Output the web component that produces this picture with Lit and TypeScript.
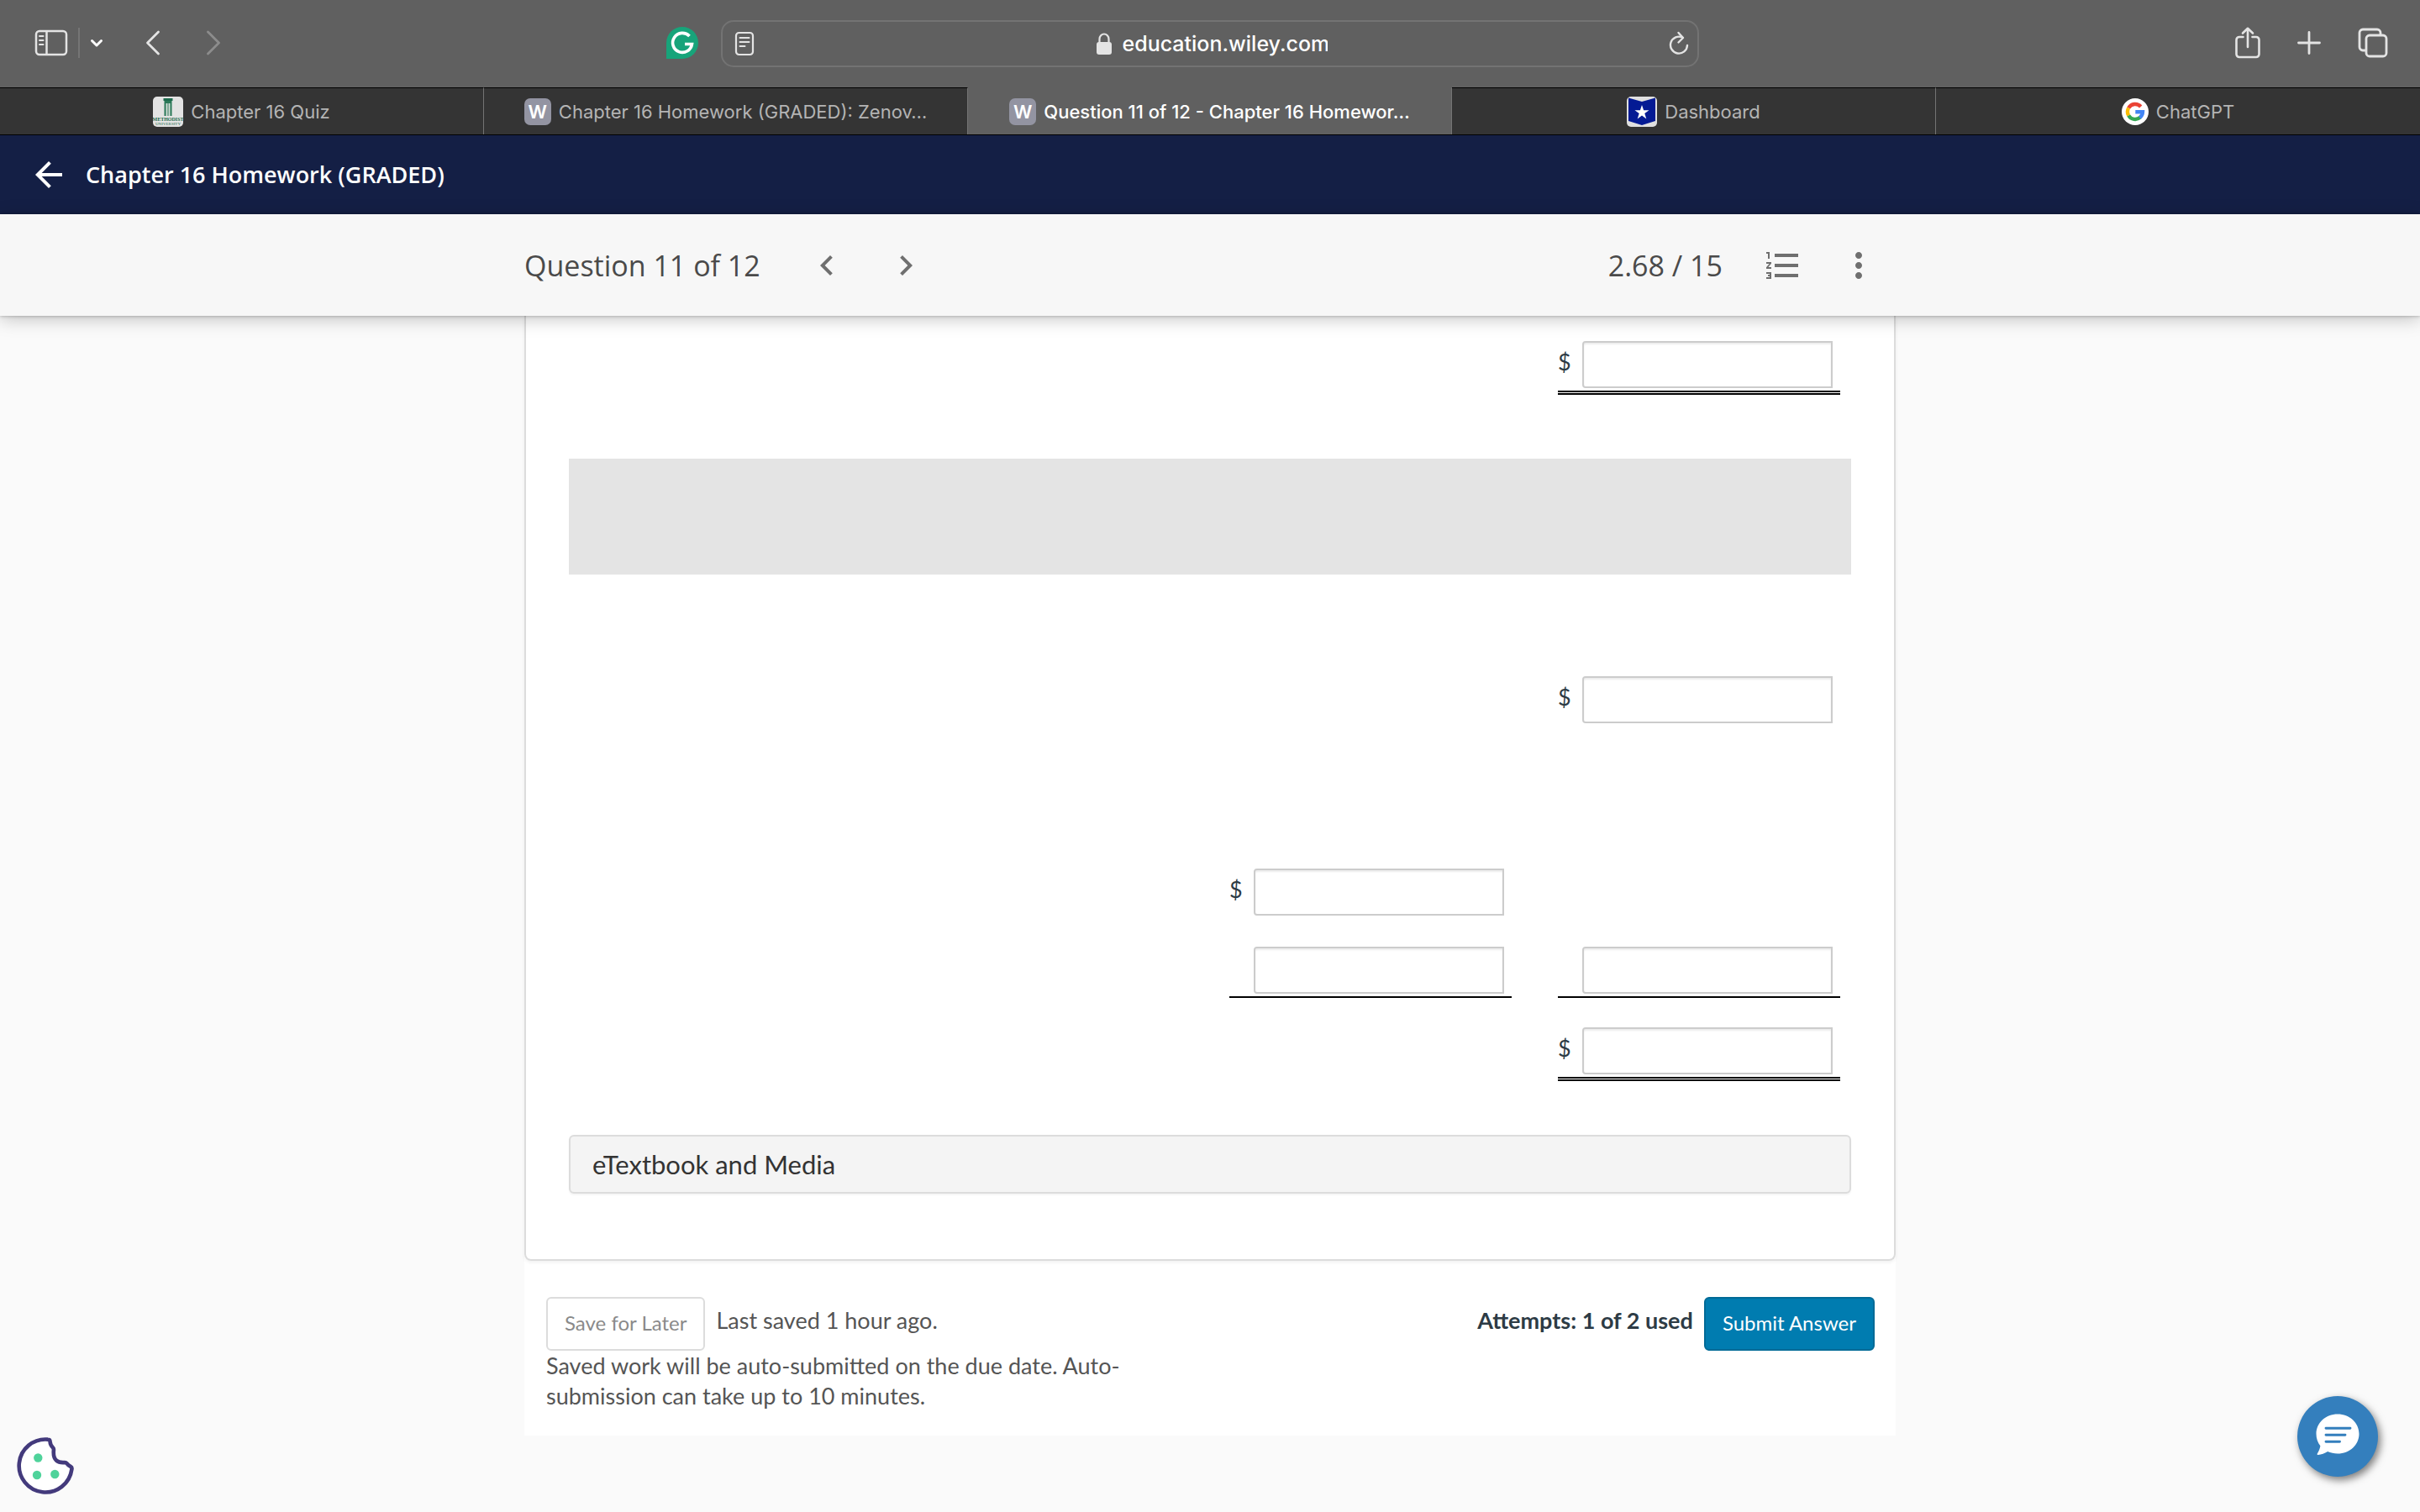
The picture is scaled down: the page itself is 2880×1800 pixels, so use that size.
import { LitElement, html, css, svg, nothing } from "lit";
import { customElement, property } from "lit/decorators.js";
import { classMap } from "lit/directives/class-map.js";

type Favicon = "methodist" | "w" | "star" | "google";

interface BrowserTab {
  title: string;
  icon: Favicon;
  active?: boolean;
}

const TABS: BrowserTab[] = [
  { title: "Chapter 16 Quiz", icon: "methodist" },
  { title: "Chapter 16 Homework (GRADED): Zenov…", icon: "w" },
  { title: "Question 11 of 12 - Chapter 16 Homewor…", icon: "w", active: true },
  { title: "Dashboard", icon: "star" },
  { title: "ChatGPT", icon: "google" },
];

@customElement("browser-chrome")
export class BrowserChrome extends LitElement {
  static styles = css`
    :host {
      display: block;
      font-family: Inter, "Liberation Sans", sans-serif;
      color: #fff;
      background: #606060;
    }
    svg {
      display: block;
      flex: none;
    }
    button {
      border: 0;
      padding: 0;
      background: none;
      font: inherit;
      color: #e4e4e4;
    }
    .bar {
      display: grid;
      grid-template-columns: minmax(0, 1fr) minmax(0, 1164px) minmax(0, 1fr);
      height: 104px;
      align-items: center;
    }
    .side {
      display: flex;
      align-items: center;
      height: 56px;
    }
    .left {
      padding: 0 27px 2px 41px;
    }
    .right {
      justify-content: flex-end;
      gap: 44px;
      padding: 0 38px 2px 0;
    }
    .split {
      width: 2px;
      height: 36px;
      margin: 0 12px;
      background: #757575;
    }
    .back {
      margin-left: 50px;
    }
    .forward {
      margin-left: 54px;
      color: #8c8c8c;
    }
    .extension {
      margin-left: auto;
    }
    .address {
      display: flex;
      align-items: center;
      justify-content: space-between;
      box-sizing: border-box;
      height: 56px;
      padding: 0 10px 0 14px;
      border: 2px solid #737373;
      border-radius: 15px;
    }
    .site {
      display: flex;
      align-items: center;
      gap: 13px;
    }
    .url {
      width: 244px;
      padding: 0;
      border: 0;
      background: none;
      color: #fff;
      font: 500 25px/32px Inter, "Liberation Sans", sans-serif;
    }
    .tabs {
      display: grid;
      grid-template-columns: repeat(5, minmax(0, 1fr));
      border-bottom: 1px solid #000;
    }
    .tab {
      display: flex;
      align-items: center;
      justify-content: center;
      gap: 9px;
      height: 56px;
      border-top: 1px solid #000;
      border-right: 1px solid #747474;
      background: #343434;
      color: #b4b4b4;
      font-size: 22px;
      white-space: nowrap;
    }
    .tab:last-child {
      border-right: 0;
    }
    .active {
      border-top-color: #606060;
      background: #606060;
      color: #fff;
      font-weight: 500;
    }
    .letter {
      width: 32px;
      height: 32px;
      border-radius: 7px;
      background: #9394a2;
      color: #fff;
      font-size: 22px;
      font-weight: 600;
      line-height: 33px;
      text-align: center;
    }
  `;

  private favicon(icon: Favicon) {
    switch (icon) {
      case "methodist":
        return html`<svg width="36" height="36" viewBox="0 0 36 36" aria-hidden="true">
          <rect width="36" height="36" rx="5" fill="#e3e3e3" />
          <path d="M12.500 2h11v3h-11z" fill="#1d6b4d" />
          <path d="M13.500 5h9v18h-9z" fill="#2b7858" />
          <path d="M15.500 8h5v15h-5z" fill="#cfdcd5" />
          <path d="M17 8h2v15h-2z" fill="#7fa896" />
          <text x="18" y="29" font-family="Liberation Serif, serif" font-size="6" font-weight="700" text-anchor="middle" fill="#1d6b4d">METHODIST</text>
          <text x="18" y="34" font-family="Liberation Serif, serif" font-size="5" text-anchor="middle" fill="#1d6b4d">UNIVERSITY</text>
        </svg>`;
      case "w":
        return html`<span class="letter">W</span>`;
      case "star":
        return html`<svg width="36" height="36" viewBox="0 0 36 36" aria-hidden="true">
          <rect width="36" height="36" rx="5" fill="#e0e0e0" />
          <path d="M2 1.500 18 6l16-4.500V29l-16 5L2 29z" fill="#041a94" />
          <path d="m18 10 2.100 6.200h6.400l-5.200 3.900 2 6.300-5.300-3.900-5.300 3.900 2-6.300-5.200-3.900h6.400z" fill="#fff" />
        </svg>`;
      default:
        return html`<svg width="32" height="32" viewBox="0 0 32 32" aria-hidden="true">
          <circle cx="16" cy="16" r="16" fill="#fff" />
          <g fill="none" stroke-width="4.400">
            <path d="M8.200 11.500A9 9 0 0 1 22.700 9.900" stroke="#ea4335" />
            <path d="M8.200 20.500A9 9 0 0 1 8.200 11.500" stroke="#fbbc05" />
            <path d="M22 22.700A9 9 0 0 1 8.200 20.500" stroke="#34a853" />
            <path d="M16.300 16.200H25A9 9 0 0 1 21.500 23" stroke="#4285f4" />
          </g>
        </svg>`;
    }
  }

  render() {
    return html`
      <div class="bar">
        <div class="side left">
          <button aria-label="Sidebar">
            <svg width="40" height="32" viewBox="0 0 40 32" fill="none" stroke="currentColor" stroke-width="2.500">
              <rect x="2" y="2" width="36" height="28" rx="4" />
              <path d="M14.500 2v28" />
              <path d="M6 8h4.500M6 13h4.500M6 18h4.500" stroke-width="2" stroke-linecap="round" />
            </svg>
          </button>
          <span class="split"></span>
          <button aria-label="Tab groups">
            <svg width="16" height="12" viewBox="0 0 16 12" fill="none" stroke="#fff" stroke-width="3" stroke-linecap="round" stroke-linejoin="round">
              <path d="m2.500 3.500 5.500 5.500 5.500-5.500" />
            </svg>
          </button>
          <button class="back" aria-label="Back">
            <svg width="18" height="32" viewBox="0 0 18 32" fill="none" stroke="currentColor" stroke-width="2.800" stroke-linecap="round" stroke-linejoin="round">
              <path d="M15.500 3 2.500 16l13 13" />
            </svg>
          </button>
          <button class="forward" aria-label="Forward">
            <svg width="18" height="32" viewBox="0 0 18 32" fill="none" stroke="currentColor" stroke-width="2.800" stroke-linecap="round" stroke-linejoin="round">
              <path d="m2.500 3 13 13-13 13" />
            </svg>
          </button>
          <button class="extension" aria-label="Grammarly">
            <svg width="38" height="38" viewBox="0 0 38 38">
              <path d="M19 0a19 19 0 0 1 0 38H0V19A19 19 0 0 1 19 0z" fill="#17a47a" />
              <path d="M27.500 11A11.500 11.500 0 1 0 30.500 20.500H22" fill="none" stroke="#fff" stroke-width="3.600" />
            </svg>
          </button>
        </div>
        <div class="address">
          <button aria-label="Reader">
            <svg width="24" height="30" viewBox="0 0 24 30" fill="none" stroke="currentColor" stroke-width="2.200">
              <rect x="2" y="2" width="20" height="26" rx="3.500" />
              <path d="M6.500 8h11M6.500 13h11M6.500 18h6" stroke-linecap="round" stroke-width="2" />
            </svg>
          </button>
          <div class="site">
            <svg width="18" height="26" viewBox="0 0 18 26" aria-hidden="true">
              <path d="M3.500 13V7.500a5.500 6 0 0 1 11 0V13" fill="none" stroke="#e4e4e4" stroke-width="2.200" />
              <rect y="11" width="18" height="15" rx="3" fill="#e4e4e4" />
            </svg>
            <input class="url" type="text" aria-label="Address" value="education.wiley.com" />
          </div>
          <button aria-label="Reload">
            <svg width="24" height="30" viewBox="0 0 24 30" fill="none" stroke="currentColor" stroke-width="2.400" stroke-linecap="round" stroke-linejoin="round">
              <path d="M16.500 7.700A10 10 0 1 0 22 17" />
              <path d="m11.500 2 5.500 6-5.500 5.500" />
            </svg>
          </button>
        </div>
        <div class="side right">
          <button aria-label="Share">
            <svg width="30" height="38" viewBox="0 0 30 38" fill="none" stroke="currentColor" stroke-width="2.600" stroke-linecap="round" stroke-linejoin="round">
              <path d="M9.500 12H5a3.500 3.500 0 0 0-3.500 3.500v17A3.500 3.500 0 0 0 5 36h20a3.500 3.500 0 0 0 3.500-3.500v-17A3.500 3.500 0 0 0 25 12h-4.500" />
              <path d="M15 24V2M9 7.500 15 1.800l6 5.700" />
            </svg>
          </button>
          <button aria-label="New tab">
            <svg width="28" height="28" viewBox="0 0 28 28" stroke="currentColor" stroke-width="2.800" stroke-linecap="round">
              <path d="M14 1.500v25M1.500 14h25" />
            </svg>
          </button>
          <button aria-label="Tab overview">
            <svg width="36" height="36" viewBox="0 0 36 36" fill="none" stroke="currentColor" stroke-width="2.800">
              <rect x="10" y="9" width="24" height="25" rx="4" />
              <path d="M10 27H6a4 4 0 0 1-4-4V6a4 4 0 0 1 4-4h17a4 4 0 0 1 4 4v3" />
            </svg>
          </button>
        </div>
      </div>
      <nav class="tabs">
        ${TABS.map(
          (t) => html`<button class=${classMap({ tab: true, active: !!t.active })}>
            ${this.favicon(t.icon)}<span>${t.title}</span>
          </button>`
        )}
      </nav>
    `;
  }
}

@customElement("amount-field")
export class AmountField extends LitElement {
  @property() name = "";
  @property({ type: Boolean }) currency = false;
  @property() rule: "none" | "single" | "double" = "none";

  static styles = css`
    :host {
      display: block;
      color: #2d3b45;
      font: 27px/36px Lato, sans-serif;
    }
    .amount {
      display: grid;
      grid-template-columns: 29px minmax(0, 1fr);
      align-items: center;
      padding: 0 9px 2px 0;
    }
    .single {
      padding-bottom: 3px;
      border-bottom: 2px solid #000;
    }
    .double {
      padding-bottom: 3px;
      border-bottom: 5px double #000;
    }
    label {
      padding-bottom: 6px;
    }
    .box {
      grid-column: 2;
      box-sizing: border-box;
      width: 100%;
      height: 56px;
      padding: 0 12px;
      border: 2px solid #ccc;
      border-radius: 4px 0 0 4px;
      background: #fff;
      box-shadow: inset 0 2px 2px rgba(0, 0, 0, 0.08);
      color: inherit;
      font: inherit;
      text-align: right;
    }
  `;

  render() {
    return html`<div class=${classMap({ amount: true, [this.rule]: true })}>
      ${this.currency ? html`<label for="box">$</label>` : nothing}
      <input class="box" id="box" type="text" aria-label=${this.name} />
    </div>`;
  }
}

const icon = (d: string) => html`<svg width="48" height="48" viewBox="0 0 24 24" aria-hidden="true">
  ${svg`<path d=${d} fill="currentColor" />`}
</svg>`;

@customElement("app-root")
export class AppRoot extends LitElement {
  static styles = css`
    :host {
      display: block;
      min-height: 100vh;
      background: #fafafa;
      font-family: Lato, sans-serif;
      color: #2d3b45;
    }
    svg {
      display: block;
    }
    button {
      font-family: inherit;
    }
    .plain {
      display: block;
      padding: 0;
      border: 0;
      background: none;
      color: inherit;
    }
    .course {
      display: flex;
      align-items: center;
      gap: 20px;
      height: 94px;
      padding-left: 34px;
      background: #141f45;
      color: #fff;
    }
    .course a {
      color: inherit;
    }
    .course h1 {
      margin: 0;
      font: 600 27px/40px "Open Sans", sans-serif;
    }
    .toolbar {
      position: relative;
      z-index: 1;
      background: #f7f7f7;
      color: #6f6f6f;
      box-shadow: 0 0 4px rgba(0, 0, 0, 0.3), 0 4px 20px rgba(0, 0, 0, 0.22);
    }
    .inner {
      display: flex;
      align-items: center;
      box-sizing: border-box;
      max-width: 1632px;
      height: 121px;
      margin: 0 auto;
      padding-right: 20px;
    }
    .inner h2,
    .score {
      margin: 0;
      color: #4a4a4a;
      font: 400 34px/48px "Open Sans", sans-serif;
    }
    .pager {
      display: flex;
      gap: 46px;
      margin-left: 55px;
    }
    .tools {
      display: flex;
      align-items: center;
      gap: 42px;
      margin-left: auto;
    }
    .score {
      margin-right: 6px;
    }
    .column {
      max-width: 1632px;
      margin: 0 auto;
      background: #fff;
    }
    .card {
      padding: 0 51px 78px;
      border: 2px solid #dcdcdc;
      border-top: 0;
      border-radius: 0 0 8px 8px;
      box-shadow: 0 2px 4px rgba(0, 0, 0, 0.06);
    }
    table {
      width: 100%;
      table-layout: fixed;
      border-collapse: collapse;
    }
    .value {
      width: 391px;
    }
    td {
      box-sizing: border-box;
      padding: 17px 13px 18px 42px;
      vertical-align: top;
    }
    .first td {
      height: 170px;
      padding-top: 30px;
    }
    .band td {
      height: 138px;
      background: #e4e4e4;
    }
    .heading td {
      height: 104px;
    }
    .blank td {
      height: 136px;
    }
    .media {
      display: block;
      width: 100%;
      height: 70px;
      margin-top: 46px;
      padding: 0 26px;
      border: 2px solid #dcdcdc;
      border-radius: 6px;
      background: #f4f4f4;
      box-shadow: 0 2px 2px rgba(0, 0, 0, 0.04);
      color: #333;
      font-size: 31px;
      line-height: 40px;
      text-align: left;
    }
    .footer {
      display: flex;
      justify-content: space-between;
      align-items: flex-start;
      padding: 43px 25px 29px 26px;
      font-size: 27px;
      line-height: 36px;
    }
    .saved {
      width: 720px;
      color: #555;
    }
    .saved p {
      margin: 0;
    }
    .line {
      display: flex;
      gap: 13px;
      align-items: center;
    }
    .line span {
      padding-bottom: 8px;
    }
    .action {
      height: 64px;
      padding: 0 20px 2px;
      border: 2px solid #dcdcdc;
      border-radius: 6px;
      background: #fff;
      color: #8a8a8a;
      font-size: 24px;
      line-height: 36px;
    }
    .submit {
      border-color: #006a96;
      background: #007cb0;
      color: #fff;
    }
    .attempts {
      font-weight: 700;
    }
    .chat {
      position: fixed;
      right: 50px;
      bottom: 42px;
      width: 96px;
      height: 96px;
      padding: 0;
      border: 0;
      border-radius: 50%;
      background: #347fbd;
      box-shadow: 3px 4px 10px rgba(0, 0, 0, 0.5);
    }
    .cookie {
      position: fixed;
      left: 20px;
      bottom: 21px;
    }
  `;

  render() {
    return html`
      <browser-chrome></browser-chrome>
      <header class="course">
        <a href="#assignment" aria-label="Back to assignment">
          ${icon("M20 11H7.830l5.590-5.590L12 4l-8 8 8 8 1.410-1.410L7.830 13H20v-2z")}
        </a>
        <h1>Chapter 16 Homework (GRADED)</h1>
      </header>
      <div class="toolbar">
        <div class="inner">
          <h2>Question 11 of 12</h2>
          <div class="pager">
            <button class="plain" aria-label="Previous question">
              ${icon("M15.410 7.410 14 6l-6 6 6 6 1.410-1.410L10.830 12z")}
            </button>
            <button class="plain" aria-label="Next question">
              ${icon("M10 6 8.590 7.410 13.170 12l-4.580 4.590L10 18l6-6z")}
            </button>
          </div>
          <div class="tools">
            <span class="score">2.68 / 15</span>
            <button class="plain" aria-label="Question list">
              ${icon(
                "M2 17h2v.5H3v1h1v.5H2v1h3v-4H2v1zm1-9h1V4H2v1h1v3zm-1 3h1.800L2 13.100v.9h3v-1H3.200L5 10.900V10H2v1zm5-6v2h14V5H7zm0 14h14v-2H7v2zm0-6h14v-2H7v2z"
              )}
            </button>
            <button class="plain" aria-label="More options">
              ${icon(
                "M12 8c1.100 0 2-.9 2-2s-.9-2-2-2-2 .9-2 2 .9 2 2 2zm0 2c-1.100 0-2 .9-2 2s.9 2 2 2 2-.9 2-2-.9-2-2-2zm0 6c-1.100 0-2 .9-2 2s.9 2 2 2 2-.9 2-2-.9-2-2-2z"
              )}
            </button>
          </div>
        </div>
      </div>
      <main class="column">
        <section class="card">
          <table>
            <colgroup>
              <col />
              <col class="value" />
              <col class="value" />
            </colgroup>
            <tbody>
              <tr class="first">
                <td></td>
                <td></td>
                <td><amount-field name="Total" currency rule="double"></amount-field></td>
              </tr>
              <tr class="band">
                <td colspan="3"></td>
              </tr>
              <tr class="heading">
                <td colspan="3"></td>
              </tr>
              <tr>
                <td></td>
                <td></td>
                <td><amount-field name="Amount" currency></amount-field></td>
              </tr>
              <tr class="blank">
                <td colspan="3"></td>
              </tr>
              <tr>
                <td></td>
                <td><amount-field name="Amount" currency></amount-field></td>
                <td></td>
              </tr>
              <tr>
                <td></td>
                <td><amount-field name="Amount" rule="single"></amount-field></td>
                <td><amount-field name="Subtotal" rule="single"></amount-field></td>
              </tr>
              <tr>
                <td></td>
                <td></td>
                <td><amount-field name="Total" currency rule="double"></amount-field></td>
              </tr>
            </tbody>
          </table>
          <button class="media">eTextbook and Media</button>
        </section>
        <footer class="footer">
          <div class="saved">
            <div class="line">
              <button class="action">Save for Later</button>
              <span>Last saved 1 hour ago.</span>
            </div>
            <p>Saved work will be auto-submitted on the due date. Auto-submission can take up to 10 minutes.</p>
          </div>
          <div class="line">
            <span class="attempts">Attempts: 1 of 2 used</span>
            <button class="action submit">Submit Answer</button>
          </div>
        </footer>
      </main>
      <button class="plain cookie" aria-label="Cookie settings">
        <svg width="68" height="68" viewBox="0 0 68 68">
          <path
            d="M37 2.600c1.500.1 2.500 1.200 2.600 2.600.1 3.200 1.600 5.400 3.400 7.300.8.8 1 1.700.9 2.800-.7 6.700.6 10 3.300 12.500 2.600 2.400 5.500 2.600 9.700 2.300 1.200-.1 2 .3 2.800 1.200 1.200 1.700 2.500 2.700 4.300 3.600 1.200.6 1.700 1.800 1.400 3.200A31.500 31.500 0 1 1 37 2.600z"
            fill="#fff"
            stroke="#433a7c"
            stroke-width="4.600"
            stroke-linejoin="round"
          />
          <circle cx="25.300" cy="24.500" r="5.200" fill="#4fd39b" />
          <circle cx="24" cy="45" r="5.200" fill="#4fd39b" />
          <circle cx="45.300" cy="44" r="5.200" fill="#4fd39b" />
        </svg>
      </button>
      <button class="chat" aria-label="Chat">
        <svg width="96" height="96" viewBox="0 0 96 96">
          <path
            d="M48 21.500c14.200 0 25.500 10.300 25.500 23.500S62.200 68.500 48 68.500c-4.300 0-8.300-.8-11.900-2.400-3.700 2.400-7.400 3.700-11.400 3.900-1 0-1.400-.7-.9-1.500 1.900-3.100 3-5.900 3.600-9.200-3.100-4-4.900-8.900-4.900-14.300C22.500 31.800 33.800 21.500 48 21.500z"
            fill="#fff"
          />
          <path d="M34 38.300h29M34 46.300h23M34 54.300h16.500" stroke="#347fbd" stroke-width="2.900" stroke-linecap="round" />
        </svg>
      </button>
    `;
  }
}
